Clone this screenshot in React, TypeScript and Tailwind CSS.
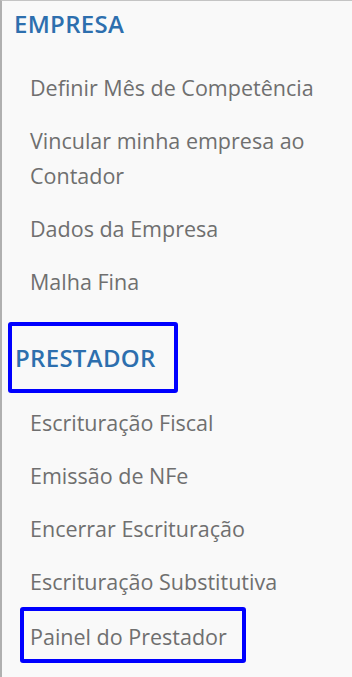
import React from "react";

const Item = ({ children }: { children: React.ReactNode }) => (
  <div className="pl-[28px] pr-3 pt-[9px] pb-[9px] text-[21.5px] leading-[35px] text-[#6f6f6f]">
    {children}
  </div>
);

export default function App() {
  return (
    <div className="w-[352px] h-[677px] overflow-hidden bg-[#f9f9f9] border-t border-l-2 border-t-[#c4c4c4] border-l-[#b0b0b0] font-['Open_Sans',sans-serif]">
      <div className="pt-[8px] pl-[12px] text-[24px] tracking-[0.3px] leading-[30px] font-semibold text-[#2d6fae]">
        EMPRESA
      </div>
      <div className="mt-[22px]">
        <Item>Definir Mês de Competência</Item>
        <Item>Vincular minha empresa ao Contador</Item>
        <Item>Dados da Empresa</Item>
        <Item>Malha Fina</Item>
      </div>
      <div className="mt-[14px] ml-[6px] w-[170px] h-[71px] border-4 border-[#0000ff] rounded-[3px] flex items-center pl-[3px]">
        <span className="text-[24px] tracking-[0.3px] leading-[30px] font-semibold text-[#2d6fae]">PRESTADOR</span>
      </div>
      <div className="mt-[3px]">
        <Item>Escrituração Fiscal</Item>
        <Item>Emissão de NFe</Item>
        <Item>Encerrar Escrituração</Item>
        <Item>Escrituração Substitutiva</Item>
        <div className="-mt-px ml-[18px] w-[226px] h-[56px] border-4 border-[#0000ff] rounded-[3px] pl-[6px] pt-[8px] text-[21.5px] leading-[35px] text-[#6f6f6f]">
          Painel do Prestador
        </div>
      </div>
    </div>
  );
}
